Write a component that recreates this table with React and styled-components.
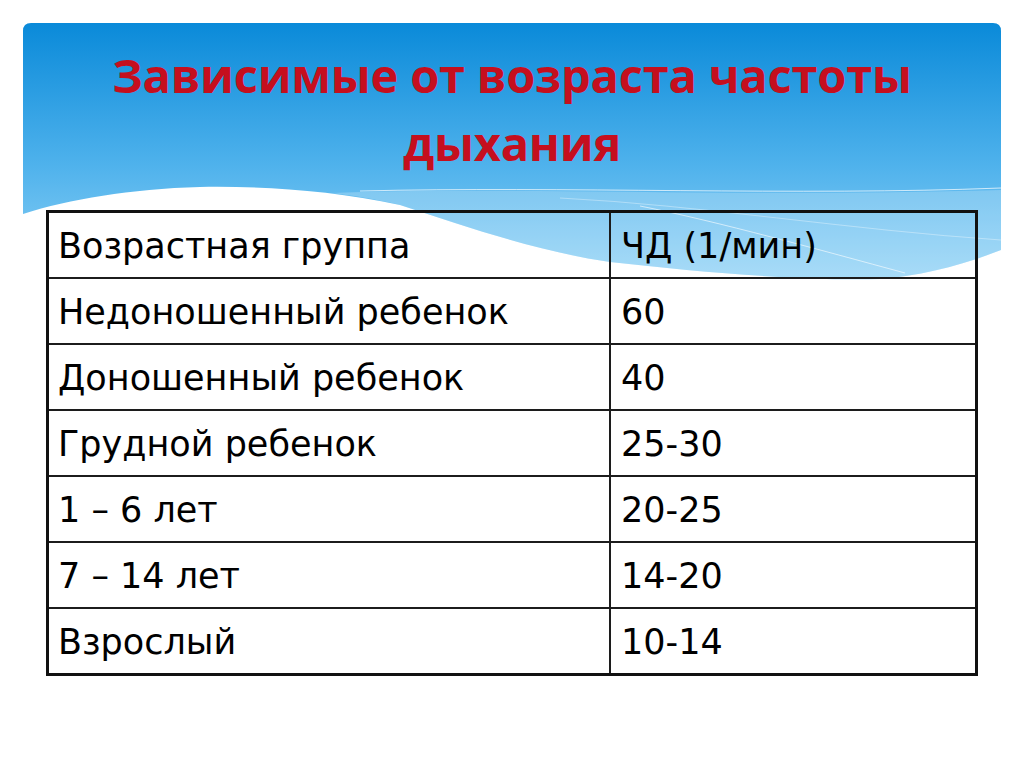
import React from "react"
import styled, { createGlobalStyle } from "styled-components"

const rows = [
  ["Возрастная группа", "ЧД (1/мин)"],
  ["Недоношенный ребенок", "60"],
  ["Доношенный ребенок", "40"],
  ["Грудной ребенок", "25-30"],
  ["1 – 6 лет", "20-25"],
  ["7 – 14 лет", "14-20"],
  ["Взрослый", "10-14"],
]

const GlobalStyle = createGlobalStyle`
  html, body {
    margin: 0;
    padding: 0;
    background: #ffffff;
  }
`

const Slide = styled.div`
  position: relative;
  width: 1024px;
  height: 767px;
  overflow: hidden;
  background: #ffffff;
`

const BannerArt = styled.svg`
  position: absolute;
  top: 0;
  left: 0;
  z-index: 0;
`

const Content = styled.div`
  position: relative;
  z-index: 1;
  display: flex;
  flex-direction: column;
  padding-top: 41px;
`

const Title = styled.h1`
  margin: 0 0 33px 0;
  width: 1024px;
  text-align: center;
  font-family: "Open Sans", "Liberation Sans", sans-serif;
  font-weight: 700;
  font-size: 47px;
  line-height: 68px;
  color: #c50f1e;
  letter-spacing: -0.2px;
`

const TableFrame = styled.div`
  margin-left: 46px;
  width: 926px;
  border: 3px solid #111;
  display: flex;
  flex-direction: column;
`

const Row = styled.div`
  display: grid;
  grid-template-columns: 560px 1fr;
  height: 64px;
  border-bottom: ${props => (props.last ? "none" : "2px solid #1c1c1c")};
`

const Cell = styled.div`
  display: flex;
  align-items: center;
  padding-left: ${props => (props.second ? "10px" : "9px")};
  padding-top: 2px;
  border-left: ${props => (props.second ? "2px solid #1c1c1c" : "none")};
  font-family: "DejaVu Sans", "Verdana", sans-serif;
  font-size: 35px;
  color: #000;
  white-space: nowrap;
`

const Banner = () => (
  <BannerArt width="1024" height="300" viewBox="0 0 1024 300">
    <defs>
      <linearGradient id="sky" x1="0" y1="23" x2="0" y2="282" gradientUnits="userSpaceOnUse">
        <stop offset="0" stopColor="#0a8ad9" />
        <stop offset="0.55" stopColor="#4fb2ec" />
        <stop offset="1" stopColor="#92d3f6" />
      </linearGradient>
    </defs>
    <path
      d="M23,31 Q23,23 31,23 H993 Q1001,23 1001,31 V250 C960,266 920,276 880,279 C800,281 700,272 610,262 C540,252 470,228 400,205 C330,190 260,186 200,187 C130,189 70,199 23,214 Z"
      fill="url(#sky)"
    />
    <path
      d="M330,193 C500,186 720,198 1001,190 V250 C960,266 920,276 880,279 C800,281 700,272 610,262 C540,252 470,228 400,205 C375,199 350,195 330,193 Z"
      fill="#ffffff"
      opacity="0.22"
    />
    <path d="M360,191 C560,186 800,196 1001,188" stroke="#ffffff" strokeOpacity="0.7" strokeWidth="1" fill="none" />
    <path d="M640,206 C720,222 820,250 905,273" stroke="#ffffff" strokeOpacity="0.6" strokeWidth="1" fill="none" />
    <path d="M560,198 C700,205 850,230 1001,240" stroke="#ffffff" strokeOpacity="0.35" strokeWidth="1" fill="none" />
  </BannerArt>
)

const App = () => {
  return (
    <Slide>
      <GlobalStyle />
      <Banner />
      <Content>
        <Title>
          Зависимые от возраста частоты
          <br />
          дыхания
        </Title>
        <TableFrame>
          {rows.map((r, i) => (
            <Row key={i} last={i === rows.length - 1}>
              <Cell>{r[0]}</Cell>
              <Cell second>{r[1]}</Cell>
            </Row>
          ))}
        </TableFrame>
      </Content>
    </Slide>
  )
}

export default App
